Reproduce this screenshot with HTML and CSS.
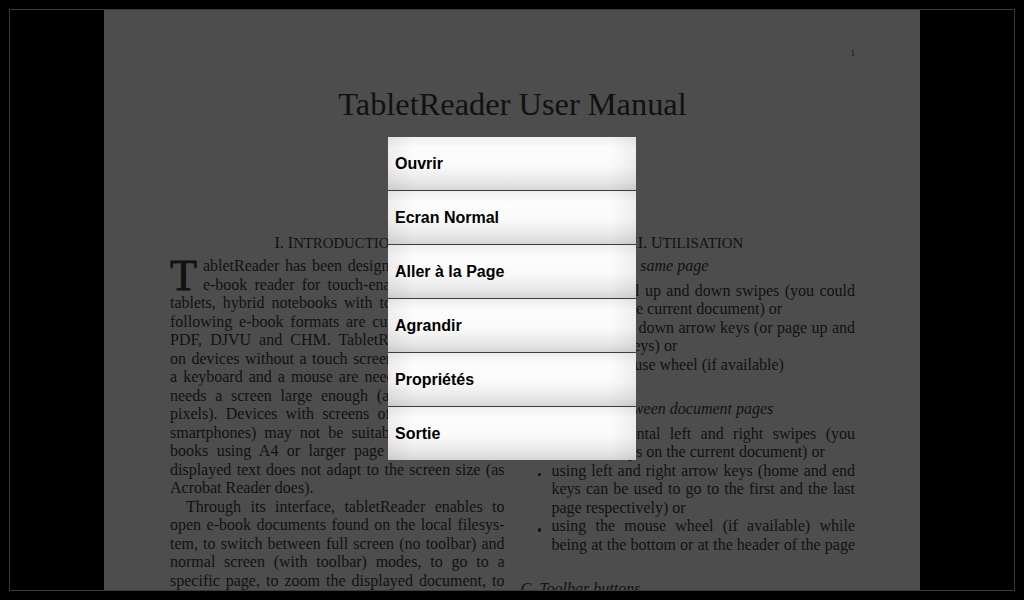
FILE: index.html
```html
<!DOCTYPE html>
<html lang="en">
<head>
<meta charset="utf-8">
<title>TabletReader</title>
<link rel="stylesheet" href="styles.css">
</head>
<body>
<div class="frame">
  <div class="page">
    <p class="pagenum">1</p>
    <h1 class="title">TabletReader User Manual</h1>
    <div class="columns">
      <section class="col">
        <h2 class="sec">I. I<span class="sc">NTRODUCTION</span></h2>
        <p class="para">
          <span class="drop">T</span>
          <span class="line">abletReader has been designed to be a simple</span>
          <span class="line">e-book reader for touch-enabled devices like</span>
          <span class="line">tablets, hybrid notebooks with touch screens. The</span>
          <span class="line">following e-book formats are currently supported:</span>
          <span class="line">PDF, DJVU and CHM. TabletReader works also</span>
          <span class="line">on devices without a touch screen, but in that case</span>
          <span class="line">a keyboard and a mouse are needed. TabletReader</span>
          <span class="line">needs a screen large enough (at least 1024x600</span>
          <span class="line">pixels). Devices with screens of small size (like</span>
          <span class="line">smartphones) may not be suitable for reading e-</span>
          <span class="line">books using A4 or larger page format since the</span>
          <span class="line">displayed text does not adapt to the screen size (as</span>
          <span class="line end">Acrobat Reader does).</span>
        </p>
        <p class="para">
          <span class="line indent">Through its interface, tabletReader enables to</span>
          <span class="line">open e-book documents found on the local filesys-</span>
          <span class="line">tem, to switch between full screen (no toolbar) and</span>
          <span class="line">normal screen (with toolbar) modes, to go to a</span>
          <span class="line">specific page, to zoom the displayed document, to</span>
          <span class="line end">read its properties and to quit the application.</span>
        </p>
      </section>
      <section class="col">
        <h2 class="sec">II. U<span class="sc">TILISATION</span></h2>
        <h3 class="sub first">A. Scrolling in the same page</h3>
        <ul class="items">
          <li><div class="txt"><span class="line">using vertical up and down swipes (you could</span><span class="line end">scroll with the current document) or</span></div></li>
          <li><div class="txt"><span class="line">using up and down arrow keys (or page up and</span><span class="line end">page down keys) or</span></div></li>
          <li><div class="txt"><span class="line end">using the mouse wheel (if available)</span></div></li>
        </ul>
        <h3 class="sub">B. Navigating between document pages</h3>
        <ul class="items">
          <li><div class="txt"><span class="line">using horizontal left and right swipes (you</span><span class="line end">could use taps on the current document) or</span></div></li>
          <li><div class="txt"><span class="line">using left and right arrow keys (home and end</span><span class="line">keys can be used to go to the first and the last</span><span class="line end">page respectively) or</span></div></li>
          <li><div class="txt"><span class="line">using the mouse wheel (if available) while</span><span class="line">being at the bottom or at the header of the page</span></div></li>
        </ul>
        <h3 class="sub">C. Toolbar buttons</h3>
      </section>
    </div>
  </div>
</div>
<div class="menu">
  <div class="item">Ouvrir</div>
  <div class="item">Ecran Normal</div>
  <div class="item">Aller à la Page</div>
  <div class="item">Agrandir</div>
  <div class="item">Propriétés</div>
  <div class="item">Sortie</div>
</div>
</body>
</html>
```
FILE: styles.css
```css
* { box-sizing: border-box; }
html, body { margin: 0; padding: 0; }
body {
  background: #000;
  width: 1024px;
  height: 600px;
  overflow: hidden;
  position: relative;
  font-family: "Liberation Serif", "Times New Roman", serif;
}
.frame {
  margin: 9px 0 0 9px;
  width: 1006px;
  height: 582px;
  border: 1px solid #3a3a3a;
  display: flex;
  justify-content: center;
  overflow: hidden;
}
.page {
  flex: none;
  width: 816px;
  height: 580px;
  background: #4d4d4d;
  color: #111;
  padding: 0 65px 0 66px;
  overflow: hidden;
}
.pagenum {
  margin: 0;
  padding-top: 38px;
  font-size: 9px;
  line-height: 10px;
  text-align: right;
}
.title {
  margin: 26px 0 0;
  font-size: 32.4px;
  line-height: 40px;
  font-weight: normal;
  text-align: center;
}
.columns {
  display: grid;
  grid-template-columns: 1fr 1fr;
  column-gap: 16px;
  margin-top: 110px;
  align-items: start;
}
.sec {
  margin: 0 0 4.5px;
  font-size: 16px;
  line-height: 18.5px;
  font-weight: normal;
  text-align: center;
}
.sc { font-size: 14.8px; line-height: 1; }
.para {
  margin: 0;
  font-size: 16px;
  line-height: 18.5px;
}
.line {
  display: block;
  text-align: justify;
  text-align-last: justify;
}
.line.end { text-align-last: left; }
.indent { text-indent: 16px; }
.drop {
  float: left;
  font-size: 44px;
  line-height: 37px;
  height: 37px;
  margin-right: 6px;
  -webkit-text-stroke: 0.8px #111;
}
.sub {
  margin: 26px 0 6px;
  font-size: 16px;
  line-height: 18.5px;
  font-style: italic;
  font-weight: normal;
}
.sub.first { margin-top: 0; }
.items {
  list-style: none;
  margin: 0;
  padding: 0;
  font-size: 16px;
  line-height: 18.5px;
}
.items li {
  display: grid;
  grid-template-columns: 31px 1fr;
  align-items: start;
}
.items li::before {
  content: "";
  width: 3.5px;
  height: 3.5px;
  border-radius: 50%;
  background: #111;
  margin: 11px 0 0 17px;
}
.menu {
  position: absolute;
  left: 388px;
  top: 137px;
  width: 248px;
  font-family: "Liberation Sans", Arial, sans-serif;
}
.item {
  height: 54px;
  border-bottom: 1px solid #3d3d3d;
  display: flex;
  align-items: center;
  padding-left: 7px;
  font-size: 16px;
  font-weight: bold;
  color: #000;
  background:
    linear-gradient(to right, rgba(0,0,0,0.06) 0, rgba(0,0,0,0) 10%, rgba(0,0,0,0) 90%, rgba(0,0,0,0.06) 100%),
    linear-gradient(to bottom, #efefef 0%, #fcfcfc 22%, #fafafa 55%, #e6e6e6 85%, #d6d6d6 100%);
}
.item:last-child {
  height: 53px;
  border-bottom: 0;
}
```
